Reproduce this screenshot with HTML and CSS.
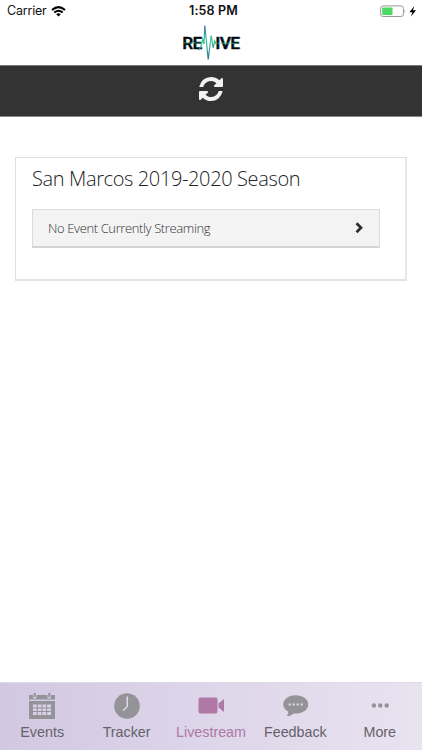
FILE: index.html
```html
<!DOCTYPE html>
<html lang="en">
<head>
<meta charset="utf-8">
<title>Revive Livestream</title>
<link rel="stylesheet" href="styles.css">
</head>
<body>
<header class="top">
  <div class="status">
    <div class="carrier"><span>Carrier</span>
      <svg width="15" height="11" viewBox="0 0 15 11" fill="none" stroke="#000" stroke-width="2"><path d="M1 4Q7.500-1.700 14 4M3.300 6.600Q7.500 3 11.700 6.600"/><path d="M5.200 8.200Q7.500 6.400 9.800 8.200L7.500 10.500Z" fill="#000" stroke="none"/></svg>
    </div>
    <div class="time">1:58 PM</div>
    <div class="power">
      <svg width="37" height="13" viewBox="0 0 37 13"><rect x=".6" y=".9" width="22.800" height="10.600" rx="2.500" fill="#fff" stroke="#999"/><rect x="2.200" y="2.500" width="10.300" height="7.400" rx=".7" fill="#4cd964"/><path d="M24.600 4q1.700 2.200 0 4.400z" fill="#999"/><path d="M34.300 1 29.400 7.200h2.900L31 11.500l5-6.300h-3z" fill="#000"/></svg>
    </div>
  </div>
  <svg class="logo" width="62" height="38" viewBox="180 24 62 38">
    <defs><linearGradient id="pulse" x1="0" y1="0" x2="0" y2="1"><stop offset="0" stop-color="#3d70ae"/><stop offset=".45" stop-color="#3cc792"/><stop offset="1" stop-color="#326c9c"/></linearGradient></defs>
    <g class="logo-shade"><text x="183" y="49.300">RE</text><text x="216" y="49.300">IVE</text></g>
    <g class="logo-text"><text x="182.300" y="48.500">RE</text><text x="215.300" y="48.500">IVE</text></g>
    <path d="M183 43h18M217 43.300h21" stroke="#55d0a0" stroke-width=".6"/>
    <path d="M199 50l2-4 1.700-7 1.300 5L204.800 25.500l3.400 34 3-24 2 12.500 1.500-7 1.300 3" fill="none" stroke="url(#pulse)" stroke-width="1.200"/>
  </svg>
</header>
<div class="toolbar">
  <svg width="24" height="24" viewBox="0 0 1536 1536" fill="#f2f2f2"><path d="M1511 928q0 5-1 7-64 268-268 434.500T764 1536q-146 0-282.500-55T238 1324l-129 129q-19 19-45 19t-45-19-19-45V960q0-26 19-45t45-19h448q26 0 45 19t19 45-19 45l-137 137q71 66 161 102t187 36q134 0 250-65t186-179q11-17 53-117 8-23 30-23h192q13 0 22.500 9.500t9.500 22.500zm25-800v448q0 26-19 45t-45 19h-448q-26 0-45-19t-19-45 19-45l138-138Q969 256 768 256q-134 0-250 65T332 500q-11 17-53 117-8 23-30 23H50q-13 0-22.500-9.500T18 608v-7q65-268 270-434.500T768 0q146 0 284 55.500T1297 212l130-129q19-19 45-19t45 19 19 45z"/></svg>
</div>
<main>
  <section class="card">
    <h1><span>San Marcos 2019-2020 Season</span></h1>
    <div class="event"><span>No Event Currently Streaming</span>
      <svg width="9" height="13" viewBox="0 0 9 13" fill="none" stroke="#2b2b2b" stroke-width="2.700"><path d="M1.500 1.300l4.500 4.500-4.500 4.500"/></svg>
    </div>
  </section>
</main>
<nav>
  <div class="tab events">
    <svg width="26" height="26" viewBox="0 0 26 26"><path d="M0 2h4v3q1.800 1.500 3.500 0V2h11v3q1.700 1.500 3.500 0V2h4v4.500H0zM0 8h26v18H0z" fill="#949397"/><path d="M5.700 0v4M20.300 0v4" stroke="#949397" stroke-width="2"/><path d="M4 11.500h18V22H4z" fill="#d8d0e6"/><path d="M4 15h18M4 18.500h18M8.300 11v11M13 11v11M17.700 11v11" stroke="#949397"/></svg>
    <span>Events</span>
  </div>
  <div class="tab tracker">
    <svg width="26" height="26" viewBox="0 0 26 26"><circle cx="13" cy="13" r="12.800" fill="#949397"/><path d="M13.300 3.500V13.500L9 17.500" fill="none" stroke="#dfdae8" stroke-width="1.500"/></svg>
    <span>Tracker</span>
  </div>
  <div class="tab active">
    <svg width="26" height="26" viewBox="0 0 26 26" fill="#af78a5"><rect x=".5" y="4.500" width="19" height="16" rx="2"/><path d="M20.500 10.500l5.500-4.500v13l-5.500-4.500z"/></svg>
    <span>Livestream</span>
  </div>
  <div class="tab feedback">
    <svg width="26" height="26" viewBox="-.7 0 26 26"><path d="M13 2.200c7 0 12.500 4 12.500 9.200S20 20.500 13 20.500l-2-.1c-2 1.700-4 2.500-7.200 2.600 1-1 1.800-2.500 1.700-4.500C2.300 16.800.5 14.200.5 11.400.5 6.200 6 2.200 13 2.200z" fill="#949397"/><path d="M6 10.500h2v2H6zM10 10.500h2v2h-2zM14 10.500h2v2h-2zM18 10.500h2v2h-2z" fill="#e3ddec"/></svg>
    <span>Feedback</span>
  </div>
  <div class="tab more">
    <svg width="26" height="26" viewBox="0 0 26 26" fill="#949397"><circle cx="6.900" cy="12.500" r="2.200"/><circle cx="13.300" cy="12.500" r="2.200"/><circle cx="19.700" cy="12.500" r="2.200"/></svg>
    <span>More</span>
  </div>
</nav>
</body>
</html>
```
FILE: styles.css
```css
* { box-sizing: border-box; }
body {
  margin: 0;
  height: 750px;
  display: flex;
  flex-direction: column;
  background: #fff;
  font-family: "Liberation Sans", Arial, sans-serif;
  overflow: hidden;
}
svg { display: block; flex: none; overflow: visible; }
.top { height: 65px; }
.status {
  height: 22px;
  display: grid;
  grid-template-columns: 1fr auto 1fr;
  align-items: center;
  padding: 0 5px 0 7px;
  font: 12.500px/22px Inter, sans-serif;
  color: #111;
}
.carrier { display: flex; align-items: center; gap: 6px; }
.carrier span { width: 38px; white-space: nowrap; letter-spacing: -.2px; }
.time { font-weight: 600; letter-spacing: .15px; padding-left: 3px; }
.power { justify-self: end; }
.logo { margin: 2px 0 0 180px; }
.logo text { font: 500 17px Roboto, sans-serif; letter-spacing: -.4px; }
.logo-shade { fill: #4b9bb4; }
.logo-text { fill: #080808; stroke: #080808; stroke-width: .3px; }
.toolbar {
  height: 52px;
  background: #333;
  border-top: 1px solid #777;
  border-bottom: 1px solid #888;
  display: flex;
  justify-content: center;
  padding-top: 11px;
}
main { flex: 1; padding: 40px 15px 0; }
.card {
  width: 392px;
  height: 124px;
  border: 1px solid #dedede;
  border-width: 1px 2px 2px 1px;
  border-right-color: #e7e7e7;
  border-bottom-color: #e4e4e4;
  padding: 0 25px 0 16px;
  font-family: "Open Sans", sans-serif;
  font-weight: 300;
}
h1 {
  height: 51px;
  margin: 0;
  padding-top: 6px;
  font-weight: 300;
  font-size: 20px;
  line-height: 30px;
  letter-spacing: -.37px;
  color: #222;
  white-space: nowrap;
}
.event {
  height: 39px;
  background: #f3f3f3;
  border: 1px solid #dcdcdc;
  border-bottom: 2px solid #d4d4d4;
  display: flex;
  justify-content: space-between;
  align-items: center;
  padding: 0 15px;
  color: #333;
  font-size: 13px;
  letter-spacing: -.38px;
}
nav {
  height: 68px;
  border-top: 1px solid #ddd9e5;
  background: linear-gradient(90deg, #d2c8e2, #e9e3f0);
  display: grid;
  grid-template-columns: repeat(5, 1fr);
}
.tab {
  display: flex;
  flex-direction: column;
  align-items: center;
  padding-top: 10px;
  font-size: 14.300px;
  line-height: 18px;
  color: #646269;
}
.tab span { margin-top: 4px; }
.active { color: #af78a5; }
```
